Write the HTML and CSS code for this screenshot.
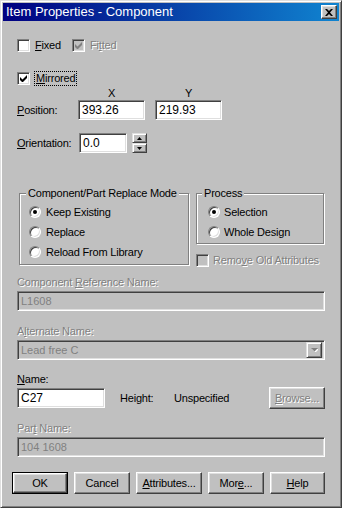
FILE: index.html
```html
<!DOCTYPE html>
<html>
<head>
<meta charset="utf-8">
<title>Item Properties - Component</title>
<link rel="stylesheet" href="styles.css">
</head>
<body>
<div class="window">
  <div class="titlebar">
    <span class="title">Item Properties - Component</span>
    <span class="close-btn"><svg width="8" height="7" viewBox="0 0 8 7"><path d="M0 0h2l2 2 2-2h2L5 3.5 8 7H6L4 5 2 7H0l3-3.5z" fill="#000"/></svg></span>
  </div>
  <div class="content">
    <div class="row checks">
      <div class="check w-fixed"><span class="cbox"></span><span class="lbl"><u>F</u>ixed</span></div>
      <div class="check disabled"><span class="cbox"><svg width="7" height="7" viewBox="0 0 7 7"><path d="M0 2v3l2 2h1l4-4V0L2.5 4.5z"/></svg></span><span class="lbl dis">Fi<u>t</u>ted</span></div>
    </div>
    <div class="row mirrored">
      <div class="check"><span class="cbox"><svg width="7" height="7" viewBox="0 0 7 7"><path d="M0 2v3l2 2h1l4-4V0L2.5 4.5z"/></svg></span><span class="lbl focus"><u>M</u>irrored</span></div>
    </div>
    <div class="row xy-head"><span class="lblcol"></span><span class="coord">X</span><span class="coord">Y</span></div>
    <div class="row position">
      <span class="lblcol"><u>P</u>osition:</span>
      <div class="field coord">393.26</div>
      <div class="field coord">219.93</div>
    </div>
    <div class="row orientation">
      <span class="lblcol wide"><u>O</u>rientation:</span>
      <div class="field angle">0.0</div>
      <div class="spinner">
        <span class="spin"><svg width="5" height="3" viewBox="0 0 5 3"><path d="M2.5 0L5 3H0z"/></svg></span>
        <span class="spin"><svg width="5" height="3" viewBox="0 0 5 3"><path d="M0 0h5L2.5 3z"/></svg></span>
      </div>
    </div>
    <div class="groups">
      <div class="group g-mode">
        <span class="group-title">Component/Part Replace Mode</span>
        <div class="radio-list">
          <div class="radio-row"><span class="radio on"></span><span>Keep Existing</span></div>
          <div class="radio-row"><span class="radio"></span><span>Replace</span></div>
          <div class="radio-row"><span class="radio"></span><span>Reload From Library</span></div>
        </div>
      </div>
      <div class="right-col">
        <div class="group g-process">
          <span class="group-title">Process</span>
          <div class="radio-list">
            <div class="radio-row"><span class="radio on"></span><span>Selection</span></div>
            <div class="radio-row"><span class="radio"></span><span>Whole Design</span></div>
          </div>
        </div>
        <div class="check disabled remove"><span class="cbox"></span><span class="lbl dis">Remo<u>v</u>e Old Attributes</span></div>
      </div>
    </div>
    <div class="block b-ref">
      <div class="flabel dis">Component <u>R</u>eference Name:</div>
      <div class="field disabled full">L1608</div>
    </div>
    <div class="block b-alt">
      <div class="flabel dis">A<u>l</u>ternate Name:</div>
      <div class="field disabled full combo">
        <span class="combo-text">Lead free C</span>
        <span class="drop"><svg width="7" height="4" viewBox="0 0 7 4"><path d="M1 1h7L4.5 4.5z" fill="#fff"/><path d="M0 0h7L3.5 3.5z" fill="#808080"/></svg></span>
      </div>
    </div>
    <div class="block b-name">
      <div class="flabel"><u>N</u>ame:</div>
      <div class="name-row">
        <div class="field name">C27</div>
        <span class="height-lbl">Height:</span>
        <span class="height-val">Unspecified</span>
        <span class="btn browse dis"><span><u>B</u>rowse...</span></span>
      </div>
    </div>
    <div class="block b-part">
      <div class="flabel dis">Par<u>t</u> Name:</div>
      <div class="field disabled full">104 1608</div>
    </div>
    <div class="buttons">
      <span class="default-ring"><span class="btn ok">OK</span></span>
      <span class="btn cancel">Cancel</span>
      <span class="btn attrs"><span><u>A</u>ttributes...</span></span>
      <span class="btn more"><span>Mor<u>e</u>...</span></span>
      <span class="btn help"><span><u>H</u>elp</span></span>
    </div>
  </div>
</div>
</body>
</html>
```
FILE: styles.css
```css
html, body {
  margin: 0;
  padding: 0;
  background: #c0c0c0;
}
body {
  font-family: "Liberation Sans", Arial, sans-serif;
  font-size: 11px;
  letter-spacing: -0.2px;
  color: #000;
}
.window {
  width: 342px;
  height: 508px;
  box-sizing: border-box;
  border: 1px solid;
  border-color: #dfdfdf #404040 #404040 #dfdfdf;
  box-shadow: inset 1px 1px 0 #fff, inset -1px -1px 0 #808080;
  padding: 2px;
  background: #c0c0c0;
  display: flex;
  flex-direction: column;
}
.titlebar {
  height: 18px;
  flex: none;
  background: linear-gradient(to right, #000080, #1084d0);
  display: flex;
  align-items: center;
  justify-content: space-between;
  padding: 0 2px 0 3px;
  color: #fff;
  font-size: 13px;
  letter-spacing: 0;
}
.title {
  line-height: 18px;
  white-space: nowrap;
}
.close-btn {
  width: 16px;
  height: 14px;
  box-sizing: border-box;
  background: #c0c0c0;
  border: 1px solid;
  border-color: #fff #404040 #404040 #fff;
  box-shadow: inset -1px -1px 0 #808080, inset 1px 1px 0 #dfdfdf;
  display: flex;
  align-items: center;
  justify-content: center;
}
.close-btn svg { display: block; margin: 0 1px 0 0; }

.content {
  padding: 0 14px;
  display: flex;
  flex-direction: column;
}
.row {
  display: flex;
  align-items: center;
  line-height: 13px;
}
.checks { margin-top: 18px; height: 13px; }
.mirrored { margin-top: 20px; height: 13px; }
.xy-head { margin-top: 2px; height: 13px; }
.position { height: 20px; }
.orientation { margin-top: 13px; height: 20px; }

.check {
  display: flex;
  align-items: center;
  gap: 5px;
  white-space: nowrap;
}
.w-fixed { width: 55px; }
.cbox {
  width: 13px;
  height: 13px;
  box-sizing: border-box;
  flex: none;
  background: #fff;
  border: 1px solid;
  border-color: #808080 #fff #fff #808080;
  box-shadow: inset 1px 1px 0 #404040, inset -1px -1px 0 #dfdfdf;
  display: flex;
  align-items: center;
  justify-content: center;
}
.cbox svg { display: block; fill: #000; }
.disabled .cbox { background: #c0c0c0; }
.disabled .cbox svg { fill: #808080; }
.focus {
  border: 1px dotted #000;
  padding: 0 1px;
  margin-left: -1px;
}
.dis {
  color: #808080;
  text-shadow: 1px 1px 0 #fff;
}

.lblcol { width: 61px; flex: none; white-space: nowrap; }
.lblcol.wide { width: 62px; }
.xy-head .coord { width: 67px; text-align: center; }
.xy-head .coord + .coord { margin-left: 10px; }

.field {
  height: 20px;
  box-sizing: border-box;
  border: 1px solid;
  border-color: #808080 #fff #fff #808080;
  box-shadow: inset 1px 1px 0 #404040, inset -1px -1px 0 #dfdfdf;
  background: #fff;
  font-size: 12px;
  letter-spacing: 0;
  line-height: 18px;
  padding-left: 3px;
  white-space: nowrap;
  overflow: hidden;
}
.field.coord { width: 67px; }
.field.coord + .field.coord { margin-left: 10px; }
.field.angle { width: 48px; }
.field.disabled {
  background: #c0c0c0;
  color: #808080;
  font-size: 11px;
  text-shadow: none;
}
.full { width: 308px; }

.spinner {
  margin-left: 5px;
  width: 15px;
  height: 20px;
  display: flex;
  flex-direction: column;
}
.spin {
  flex: 1;
  box-sizing: border-box;
  background: #c0c0c0;
  border: 1px solid;
  border-color: #dfdfdf #404040 #404040 #dfdfdf;
  box-shadow: inset 1px 1px 0 #fff, inset -1px -1px 0 #808080;
  display: flex;
  align-items: center;
  justify-content: center;
}
.spin svg { display: block; fill: #000; }

.groups {
  margin-top: 40px;
  height: 72px;
  display: flex;
  align-items: flex-start;
}
.group {
  position: relative;
  box-sizing: border-box;
  border: 1px solid #808080;
  box-shadow: inset 1px 1px 0 #fff, 1px 1px 0 #fff;
  padding-top: 12px;
}
.g-mode {
  margin-left: 2px;
  width: 170px;
  height: 72px;
  padding-left: 9px;
}
.right-col {
  margin-left: 7px;
  display: flex;
  flex-direction: column;
}
.g-process {
  width: 128px;
  height: 51px;
  padding-left: 11px;
}
.group-title {
  position: absolute;
  top: -7px;
  left: 6px;
  background: #c0c0c0;
  padding: 0 2px;
  line-height: 13px;
  white-space: nowrap;
}
.g-process .group-title { left: 5px; }
.radio-list {
  display: flex;
  flex-direction: column;
  gap: 8px;
}
.radio-row {
  display: flex;
  align-items: center;
  gap: 5px;
  height: 12px;
  line-height: 12px;
  white-space: nowrap;
}
.g-process .radio-row { gap: 4px; }
.radio {
  width: 12px;
  height: 12px;
  box-sizing: border-box;
  border-radius: 50%;
  background: #fff;
  border: 1px solid;
  border-color: #808080 #fff #fff #808080;
  box-shadow: inset 1px 1px 0 #404040, inset -1px -1px 0 #dfdfdf;
  display: flex;
  align-items: center;
  justify-content: center;
  flex: none;
}
.radio.on::after {
  content: "";
  width: 4px;
  height: 4px;
  border-radius: 50%;
  background: #000;
}
.remove {
  margin-top: 10px;
  gap: 4px;
  height: 13px;
  line-height: 13px;
}

.block { display: flex; flex-direction: column; }
.flabel { line-height: 13px; height: 13px; margin-bottom: 2px; white-space: nowrap; }
.b-ref { margin-top: 11px; }
.b-alt { margin-top: 14px; }
.b-name { margin-top: 13px; }
.b-part { margin-top: 14px; }

.combo {
  display: flex;
  align-items: center;
  padding-right: 2px;
}
.combo-text { flex: 1; }
.drop {
  width: 16px;
  height: 16px;
  box-sizing: border-box;
  background: #c0c0c0;
  border: 1px solid;
  border-color: #dfdfdf #404040 #404040 #dfdfdf;
  box-shadow: inset 1px 1px 0 #fff, inset -1px -1px 0 #808080;
  display: flex;
  align-items: center;
  justify-content: center;
}
.drop svg { display: block; }

.name-row {
  height: 20px;
  display: flex;
  align-items: center;
  white-space: nowrap;
}
.field.name { width: 88px; }
.height-lbl { margin-left: 15px; width: 54px; }
.browse {
  margin-left: auto;
  width: 56px;
  height: 23px;
}

.btn {
  box-sizing: border-box;
  background: #c0c0c0;
  border: 1px solid;
  border-color: #fff #404040 #404040 #fff;
  box-shadow: inset -1px -1px 0 #808080, inset 1px 1px 0 #dfdfdf;
  display: flex;
  align-items: center;
  justify-content: center;
  white-space: nowrap;
  height: 22px;
}
.buttons {
  margin-top: 15px;
  margin-left: -5px;
  display: flex;
  gap: 6px;
}
.default-ring {
  width: 56px;
  height: 22px;
  box-sizing: border-box;
  border: 1px solid #000;
  display: flex;
}
.default-ring .btn { width: 54px; height: 20px; }
.cancel { width: 57px; }
.attrs { width: 67px; }
.more { width: 57px; }
.help { width: 56px; }
```
